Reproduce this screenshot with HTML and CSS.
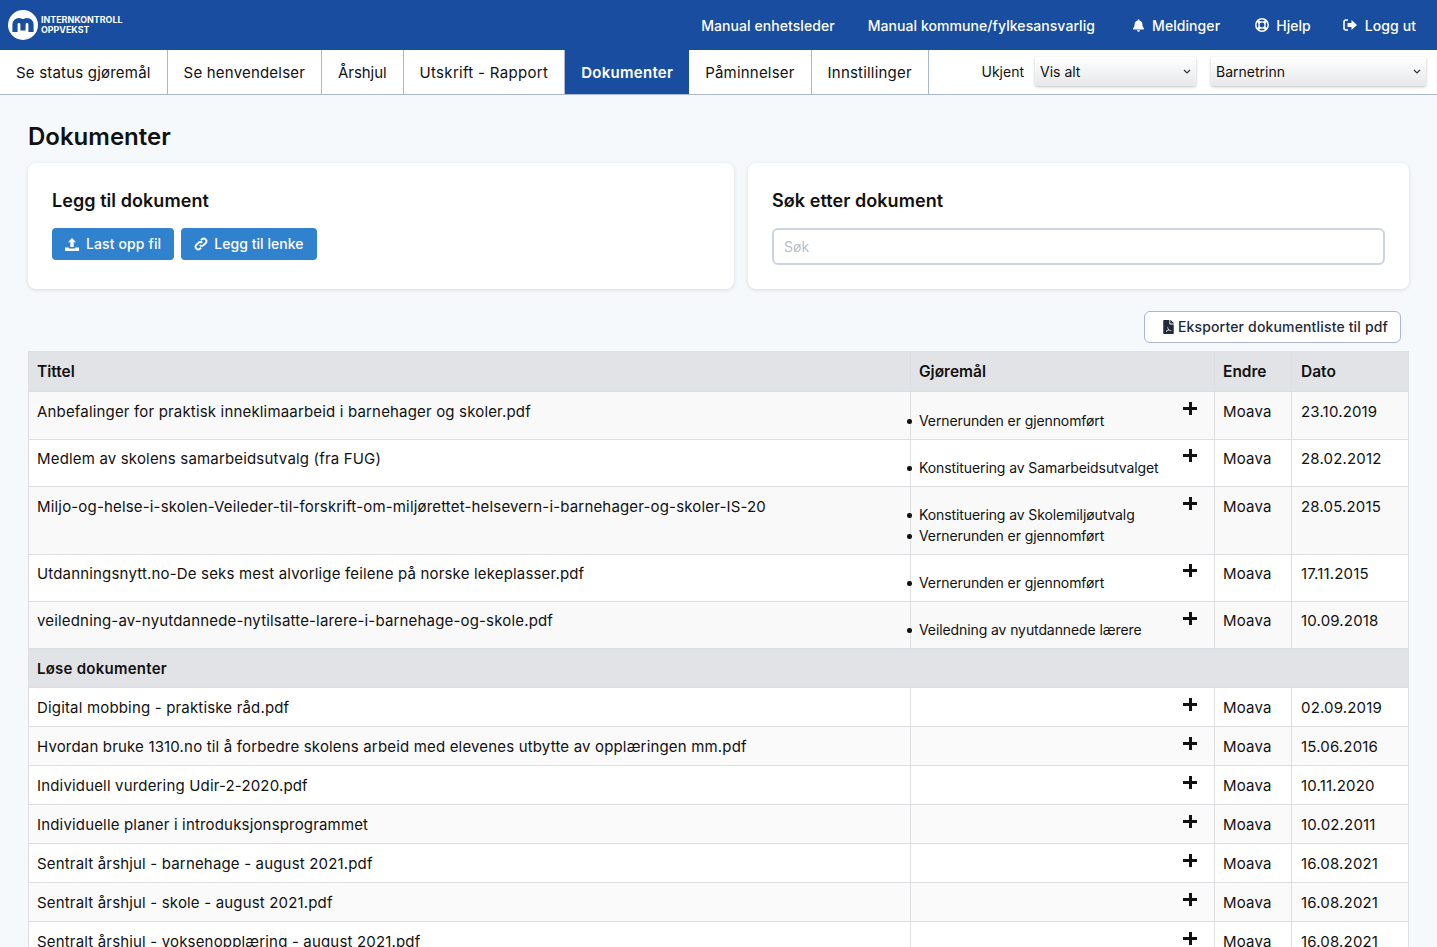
FILE: index.html
```html
<!DOCTYPE html>
<html lang="no">
<head>
<meta charset="utf-8">
<title>Dokumenter</title>
<link rel="stylesheet" href="styles.css">
</head>
<body>
<header class="topbar">
  <div class="brand">
    <svg class="brand-mark" viewBox="0 0 30 30" width="30" height="30"><circle cx="15" cy="15" r="15" fill="#fff"/><path d="M7 22V14.500a4 4 0 0 1 8 0v6M15 14.500a4 4 0 0 1 8 0v7.500" fill="none" stroke="#194da0" stroke-width="5.200"/></svg>
    <div class="brand-text"><span>INTERNKONTROLL</span><span>OPPVEKST</span></div>
  </div>
  <nav class="toplinks">
    <a>Manual enhetsleder</a>
    <a>Manual kommune/fylkesansvarlig</a>
    <a class="with-bell"><svg class="ico" viewBox="0 0 448 512" width="11" height="13"><path fill="#fff" d="M224 512c35 0 64-29 64-64H160c0 35 29 64 64 64zm215-150c-19-21-56-52-56-154 0-78-54-140-127-155V32a32 32 0 1 0-64 0v21C119 68 65 130 65 208c0 102-37 133-56 154-6 6-9 14-9 22 0 16 13 32 32 32h384c19 0 32-16 32-32 0-8-3-16-9-22z"/></svg>Meldinger</a>
    <a class="with-ring"><svg class="ico" viewBox="0 0 14 14" width="14" height="14"><g fill="none" stroke="#fff"><circle cx="7" cy="7" r="6.200" stroke-width="1.500"/><circle cx="7" cy="7" r="3.100" stroke-width="1.300"/><path d="M2.600 2.600 5 5M11.400 2.600 9 5M2.600 11.400 5 9M11.400 11.400 9 9" stroke-width="2.800"/></g></svg>Hjelp</a>
    <a><svg class="ico" viewBox="0 0 14 12" width="14" height="12"><path fill="none" stroke="#fff" stroke-width="1.600" d="M5 1H3a2 2 0 0 0-2 2v6a2 2 0 0 0 2 2h2"/><path fill="#fff" d="M8.500 1 14 6l-5.500 5V8H4.500V4h4z"/></svg>Logg ut</a>
  </nav>
</header>
<div class="tabbar">
  <nav class="tabs">
    <a class="tab">Se status gjøremål</a>
    <a class="tab">Se henvendelser</a>
    <a class="tab narrow">Årshjul</a>
    <a class="tab wide">Utskrift - Rapport</a>
    <a class="tab active">Dokumenter</a>
    <a class="tab">Påminnelser</a>
    <a class="tab">Innstillinger</a>
  </nav>
  <div class="filters">
    <span class="filter-label">Ukjent</span>
    <div class="select small"><span>Vis alt</span><svg viewBox="0 0 8 5" width="8" height="5"><path d="M1 1l3 3 3-3" fill="none" stroke="#333" stroke-width="1.200"/></svg></div>
    <div class="select large"><span>Barnetrinn</span><svg viewBox="0 0 8 5" width="8" height="5"><path d="M1 1l3 3 3-3" fill="none" stroke="#333" stroke-width="1.200"/></svg></div>
  </div>
</div>
<main class="page">
  <h1>Dokumenter</h1>
  <section class="cards">
    <div class="card">
      <h2>Legg til dokument</h2>
      <div class="actions">
        <a class="btn"><svg viewBox="0 0 14 13" width="14" height="13"><path fill="#fff" d="M7 0l4 4.200H8.700V9H5.300V4.200H3zM0 9.500h3.800v1h6.400v-1H14V13H0z"/></svg><span>Last opp fil</span></a>
        <a class="btn link"><svg viewBox="0 0 14 14" width="14" height="14"><g fill="none" stroke="#fff" stroke-width="1.900"><path d="M5.800 8.200a2.600 2.600 0 0 0 3.800 0l2.200-2.200a2.700 2.700 0 0 0-3.800-3.800L7 3.300"/><path d="M8.200 5.800a2.600 2.600 0 0 0-3.800 0L2.200 8a2.700 2.700 0 0 0 3.800 3.800l1-1.100"/></g></svg><span>Legg til lenke</span></a>
      </div>
    </div>
    <div class="card">
      <h2>Søk etter dokument</h2>
      <input class="search" type="text" placeholder="Søk">
    </div>
  </section>
  <div class="export-row">
    <a class="export"><svg viewBox="0 0 384 512" width="11" height="14"><path fill="#1f2937" d="M224 136V0H24C11 0 0 11 0 24v464c0 13 11 24 24 24h336c13 0 24-11 24-24V160H248c-13 0-24-11-24-24zm160-14v6H256V0h6c6 0 12 3 17 7l98 98c4 5 7 11 7 17z"/><path fill="#fff" d="M180 256c-6 30 2 60 20 84 16 20 50 34 90 30 14-2 14 18 0 20-36 4-70 0-96-12-30 8-54 24-70 52-8 14-28 6-22-10 12-34 46-54 78-62-18-24-28-60-20-102 2-14 22-14 20 0z"/></svg><span>Eksporter dokumentliste til pdf</span></a>
  </div>
  <table class="docs">
    <colgroup><col class="c-title"><col class="c-task"><col class="c-edit"><col class="c-date"></colgroup>
    <thead><tr><th>Tittel</th><th>Gjøremål</th><th>Endre</th><th>Dato</th></tr></thead>
    <tbody>
      <tr class="first"><td>Anbefalinger for praktisk inneklimaarbeid i barnehager og skoler.pdf</td><td class="task"><span class="plus"></span><ul><li>Vernerunden er gjennomført</li></ul></td><td>Moava</td><td>23.10.2019</td></tr>
      <tr class="high"><td>Medlem av skolens samarbeidsutvalg (fra FUG)</td><td class="task"><span class="plus"></span><ul><li>Konstituering av Samarbeidsutvalget</li></ul></td><td>Moava</td><td>28.02.2012</td></tr>
      <tr><td>Miljo-og-helse-i-skolen-Veileder-til-forskrift-om-miljørettet-helsevern-i-barnehager-og-skoler-IS-20</td><td class="task"><span class="plus"></span><ul><li>Konstituering av Skolemiljøutvalg</li><li>Vernerunden er gjennomført</li></ul></td><td>Moava</td><td>28.05.2015</td></tr>
      <tr class="high"><td>Utdanningsnytt.no-De seks mest alvorlige feilene på norske lekeplasser.pdf</td><td class="task"><span class="plus"></span><ul><li>Vernerunden er gjennomført</li></ul></td><td>Moava</td><td>17.11.2015</td></tr>
      <tr class="high"><td>veiledning-av-nyutdannede-nytilsatte-larere-i-barnehage-og-skole.pdf</td><td class="task"><span class="plus"></span><ul><li>Veiledning av nyutdannede lærere</li></ul></td><td>Moava</td><td>10.09.2018</td></tr>
      <tr class="section"><td colspan="4">Løse dokumenter</td></tr>
      <tr><td>Digital mobbing - praktiske råd.pdf</td><td class="task"><span class="plus"></span></td><td>Moava</td><td>02.09.2019</td></tr>
      <tr><td>Hvordan bruke 1310.no til å forbedre skolens arbeid med elevenes utbytte av opplæringen mm.pdf</td><td class="task"><span class="plus"></span></td><td>Moava</td><td>15.06.2016</td></tr>
      <tr><td>Individuell vurdering Udir-2-2020.pdf</td><td class="task"><span class="plus"></span></td><td>Moava</td><td>10.11.2020</td></tr>
      <tr><td>Individuelle planer i introduksjonsprogrammet</td><td class="task"><span class="plus"></span></td><td>Moava</td><td>10.02.2011</td></tr>
      <tr><td>Sentralt årshjul - barnehage - august 2021.pdf</td><td class="task"><span class="plus"></span></td><td>Moava</td><td>16.08.2021</td></tr>
      <tr><td>Sentralt årshjul - skole - august 2021.pdf</td><td class="task"><span class="plus"></span></td><td>Moava</td><td>16.08.2021</td></tr>
      <tr><td>Sentralt årshjul - voksenopplæring - august 2021.pdf</td><td class="task"><span class="plus"></span></td><td>Moava</td><td>16.08.2021</td></tr>
    </tbody>
  </table>
</main>
</body>
</html>
```
FILE: styles.css
```css
* { box-sizing: border-box; }
html, body { height: 947px; overflow: hidden; }
body { margin: 0; background: #f6f9fc; color: #111; font-family: Inter, "Liberation Sans", sans-serif; font-size: 16px; }
a { color: inherit; text-decoration: none; }
.topbar { height: 50px; background: #194da0; color: #fff; display: flex; align-items: center; justify-content: space-between; padding: 0 21px 0 8px; }
.brand { display: flex; align-items: center; gap: 3px; }
.brand-text { display: flex; flex-direction: column; font-size: 8.900px; font-weight: 700; line-height: 10px; }
.toplinks { display: flex; gap: 33px; font-size: 14px; font-weight: 500; letter-spacing: .07px; }
.toplinks a { display: flex; align-items: center; gap: 8px; }
.toplinks .with-bell { margin-left: 5px; }
.toplinks .with-ring { margin-left: 2px; margin-right: -1px; gap: 7px; }
.tabbar { height: 45px; background: #fff; border-bottom: 1px solid #a9b6cf; display: flex; justify-content: space-between; padding-right: 11px; }
.tabs { display: flex; }
.tab { display: flex; align-items: center; padding: 0 16px; border-right: 1px solid #a9b6cf; font-size: 15px; letter-spacing: .2px; }
.tab.narrow { letter-spacing: -.06px; }
.tab.wide { letter-spacing: .31px; }
.tab.active { background: #194da0; color: #fff; font-weight: 600; border-right: 0; letter-spacing: .28px; }
.filters { display: flex; align-items: center; gap: 11px; font-size: 14px; padding-bottom: 1px; }
.select { height: 29px; display: flex; align-items: center; justify-content: space-between; padding: 0 5px; background: linear-gradient(#fff, #e6e8ea); box-shadow: 0 1px 3px rgba(0,0,0,.25); border-radius: 2px; }
.select.small { width: 161px; }
.select.large { width: 215px; margin-left: 4px; }
.page { padding: 0 28px; }
h1 { margin: 0; padding-top: 27px; font-size: 24px; line-height: 30px; font-weight: 600; }
.cards { display: grid; grid-template-columns: 706px 661px; gap: 14px; margin-top: 11px; }
.card { height: 126px; background: #fff; border-radius: 8px; box-shadow: 0 1px 4px rgba(0,0,0,.12); padding: 24px; }
h2 { margin: 0 0 14px; font-size: 18px; line-height: 27px; font-weight: 600; letter-spacing: .06px; }
.actions { display: flex; gap: 7px; }
.btn { height: 32px; display: flex; align-items: center; gap: 7px; padding: 0 13px; background: #3182ce; color: #fff; border-radius: 4px; font-size: 14px; font-weight: 500; letter-spacing: .12px; }
.btn span, .export span { padding-bottom: 1px; }
.btn.link { gap: 6px; letter-spacing: .05px; }
.search { display: block; width: 613px; height: 37px; border: 2px solid #cbd5e0; border-radius: 6px; padding: 0 10px; font: 14px Inter, sans-serif; background: #fff; outline: 0; }
.search::placeholder { color: #b8bec7; }
.export-row { display: flex; justify-content: flex-end; padding: 22px 8px 8px 0; }
.export { height: 32px; display: flex; align-items: center; gap: 4px; padding: 0 12px 0 18px; background: #fff; border: 1px solid #a9b6cf; border-radius: 6px; font-size: 14px; font-weight: 500; color: #1f2937; letter-spacing: .16px; }
.docs { width: 1381px; table-layout: fixed; border-collapse: collapse; font-size: 15px; line-height: 22px; letter-spacing: .17px; }
.c-title { width: 882px; }
.c-task { width: 304px; }
.c-edit { width: 77px; }
th, td { border: 1px solid #dcdee1; padding: 9px 8px 7px; vertical-align: top; text-align: left; font-weight: 400; }
tr > :nth-child(4) { padding-left: 9px; }
th { background: #e2e3e6; font-size: 15.500px; font-weight: 600; height: 40px; letter-spacing: 0; }
tbody tr:nth-child(odd) { background: #f9f9f9; }
tbody tr:nth-child(even) { background: #fff; }
tbody tr:nth-child(n+7):nth-child(even) { background: #fafafa; }
tbody tr:nth-child(n+7):nth-child(odd) { background: #fff; }
tbody tr.section { background: #e2e3e6; }
.section td { font-weight: 600; letter-spacing: .25px; }
tr.high td { padding-top: 8px; padding-bottom: 8px; }
.task { position: relative; padding-bottom: 8px; }
.task ul { margin: 8px 0 0; padding: 0; list-style: none; font-size: 14px; line-height: 21px; letter-spacing: -.1px; }
tr.high .task ul { margin-top: 9px; }
.first .task ul { margin-top: 9px; }
.task li { position: relative; }
.task li::before { content: ""; position: absolute; left: -12px; top: 9px; width: 4.500px; height: 4.500px; border-radius: 50%; background: #111; }
.plus { position: absolute; top: 10px; right: 17px; width: 14px; height: 13px; background: linear-gradient(#111, #111) center / 100% 3px no-repeat, linear-gradient(#111, #111) center / 3px 100% no-repeat; }
tbody tr:nth-child(2) .plus, tbody tr:nth-child(4) .plus { top: 9px; }
```
